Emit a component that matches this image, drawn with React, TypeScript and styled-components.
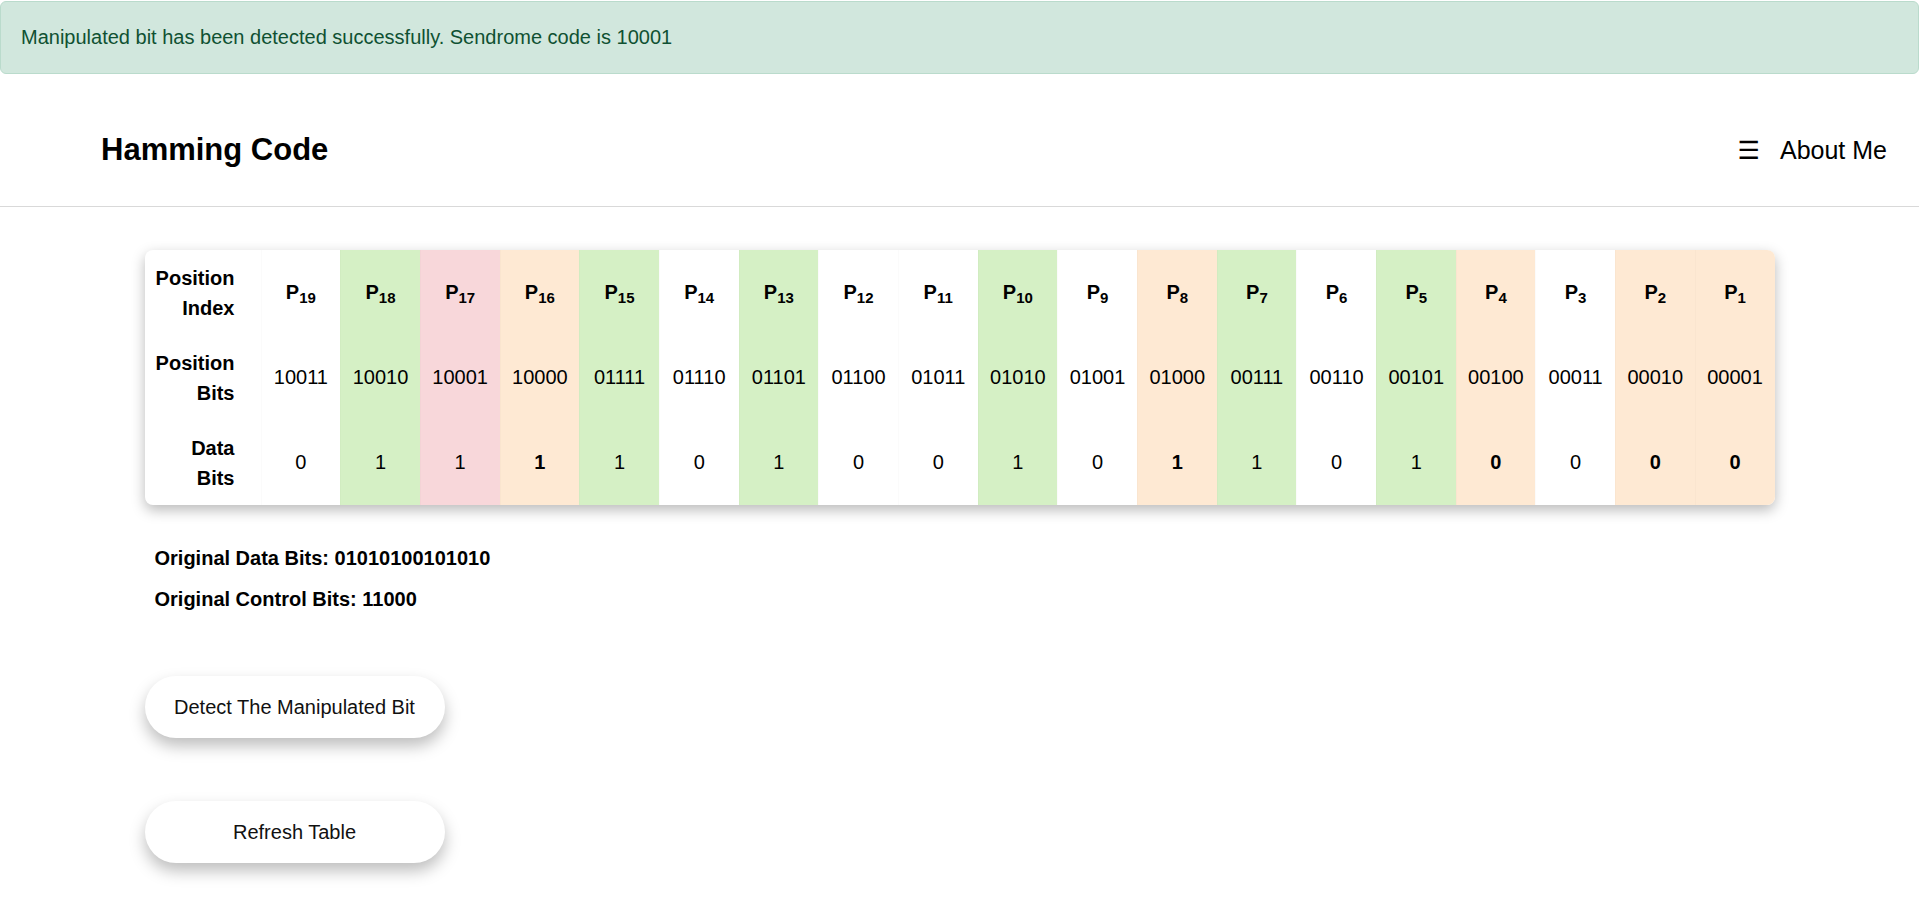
import React from 'react';
import styled, { createGlobalStyle } from 'styled-components';

const GlobalStyle = createGlobalStyle`
  html, body {
    margin: 0;
    padding: 0;
    background: #ffffff;
    font-family: "Liberation Sans", Arial, sans-serif;
    color: #000000;
  }
  #root {
    min-height: 100vh;
  }
  * {
    box-sizing: border-box;
  }
`;

const Alert = styled.div`
  margin: 1px 0 20px;
  padding: 0 20px;
  height: 73px;
  display: flex;
  align-items: center;
  background: #d1e7dd;
  border: 1px solid #badbcc;
  border-radius: 6px;
  color: #0f5132;
  font-size: 20px;
`;

const Navbar = styled.nav`
  height: 113px;
  display: flex;
  align-items: center;
  justify-content: space-between;
  padding: 0 32px 0 101px;
  border-bottom: 1px solid #d9d9d9;
`;

const Brand = styled.h1`
  margin: 0;
  font-size: 31px;
  font-weight: 700;
  color: #000000;
`;

const NavLink = styled.a`
  display: flex;
  align-items: center;
  gap: 20px;
  font-size: 25px;
  color: #000000;
  text-decoration: none;
  cursor: pointer;
`;

const Burger = styled.span`
  font-family: "DejaVu Sans", sans-serif;
  font-size: 25px;
`;

const Main = styled.main`
  width: 1630px;
  margin: 0 auto;
  padding: 43px 0 60px;
`;

const Table = styled.table`
  width: 1630px;
  table-layout: fixed;
  border-collapse: separate;
  border-spacing: 0;
  border-radius: 8px;
  overflow: hidden;
  box-shadow: 0 5px 14px rgba(0, 0, 0, 0.28);
  background: #ffffff;
`;

const LabelCell = styled.th`
  width: 116px;
  height: 85px;
  padding: 0 26px 0 8px;
  text-align: right;
  font-size: 20px;
  line-height: 30px;
  font-weight: 700;
`;

type Kind = 'parity' | 'error' | 'one' | 'zero';

const colors: Record<Kind, string> = {
  parity: '#fee9d3',
  error: '#f8d7da',
  one: '#d5f0c5',
  zero: '#ffffff',
};

const Cell = styled.td<{ $kind: Kind; $bold?: boolean }>`
  height: 85px;
  padding: 0;
  text-align: center;
  vertical-align: middle;
  font-size: 20px;
  font-weight: ${(p) => (p.$bold ? 700 : 400)};
  background: ${(p) => colors[p.$kind]};
  border-left: 1px solid rgba(0, 0, 0, 0.015);
`;

const Sub = styled.sub`
  font-size: 15px;
  vertical-align: -4px;
  line-height: 0;
`;

const Summary = styled.div`
  padding: 38px 10px 0;
`;

const SummaryLine = styled.p`
  margin: 0 0 11px;
  font-size: 20px;
  line-height: 30px;
  font-weight: 700;
`;

const Actions = styled.div`
  display: flex;
  flex-direction: column;
  align-items: flex-start;
  gap: 63px;
  padding-top: 51px;
`;

const PillButton = styled.button`
  width: 300px;
  height: 62px;
  border: none;
  border-radius: 31px;
  background: #ffffff;
  box-shadow: 0 8px 16px rgba(0, 0, 0, 0.26);
  font-family: "Liberation Sans", Arial, sans-serif;
  font-size: 20px;
  color: #111111;
  cursor: pointer;
`;

const dataBits = [0, 1, 1, 1, 1, 0, 1, 0, 0, 1, 0, 1, 1, 0, 1, 0, 0, 0, 0];
const errorPos = 17;

const columns = dataBits.map((bit, i) => {
  const pos = 19 - i;
  const parity = (pos & (pos - 1)) === 0;
  let kind: Kind = bit ? 'one' : 'zero';
  if (parity) kind = 'parity';
  if (pos === errorPos) kind = 'error';
  return { pos, bit, parity, kind, bits: pos.toString(2).padStart(5, '0') };
});

const App = () => {
  return (
    <>
      <GlobalStyle />
      <Alert>Manipulated bit has been detected successfully. Sendrome code is 10001</Alert>
      <Navbar>
        <Brand>Hamming Code</Brand>
        <NavLink>
          <Burger>☰</Burger>
          About Me
        </NavLink>
      </Navbar>
      <Main>
        <Table>
          <tbody>
            <tr>
              <LabelCell>Position Index</LabelCell>
              {columns.map((c) => (
                <Cell key={c.pos} $kind={c.kind} $bold>
                  P<Sub>{c.pos}</Sub>
                </Cell>
              ))}
            </tr>
            <tr>
              <LabelCell>Position Bits</LabelCell>
              {columns.map((c) => (
                <Cell key={c.pos} $kind={c.kind}>
                  {c.bits}
                </Cell>
              ))}
            </tr>
            <tr>
              <LabelCell>Data Bits</LabelCell>
              {columns.map((c) => (
                <Cell key={c.pos} $kind={c.kind} $bold={c.parity}>
                  {c.bit}
                </Cell>
              ))}
            </tr>
          </tbody>
        </Table>
        <Summary>
          <SummaryLine>Original Data Bits: 01010100101010</SummaryLine>
          <SummaryLine>Original Control Bits: 11000</SummaryLine>
        </Summary>
        <Actions>
          <PillButton>Detect The Manipulated Bit</PillButton>
          <PillButton>Refresh Table</PillButton>
        </Actions>
      </Main>
    </>
  );
};

export default App;
